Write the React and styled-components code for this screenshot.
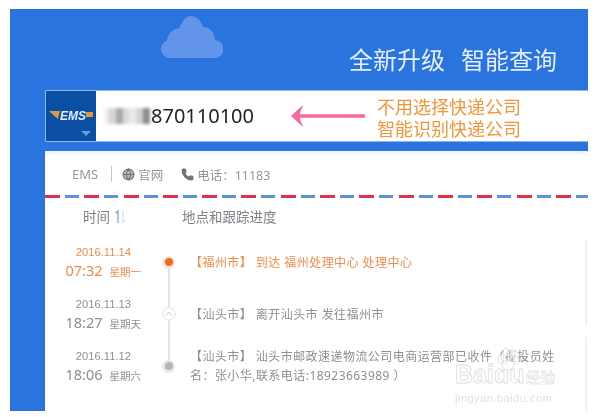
import React from "react";
import styled, { createGlobalStyle } from "styled-components";
import { Globe, Phone } from "lucide-react";

const GlobalStyle = createGlobalStyle`
  html, body {
    margin: 0;
    padding: 0;
    background: #fff;
    overflow: hidden;
  }
  * { box-sizing: border-box; }
`;

const cjk = `"Noto Sans", "Noto Sans CJK SC", sans-serif`;

const Frame = styled.div`
  position: relative;
  width: 578px;
  height: 402px;
  margin: 9px 0 0 10px;
  padding-left: 35px;
  background: #2a74e0;
  font-family: ${cjk};
  filter: blur(0.55px);
  overflow: hidden;
`;

const Banner = styled.header`
  height: 81px;
  display: flex;
  justify-content: space-between;
  padding: 14px 31px 0 115px;
`;

const Cloud = styled.svg`
  width: 63px;
  height: 42px;
  margin-top: -7px;
`;

const Slogan = styled.h1`
  margin: 20px 0 0;
  display: flex;
  gap: 16px;
  height: 34px;
  font-size: 24px;
  line-height: 34px;
  font-weight: 400;
  color: #e6effd;
`;

const SearchBar = styled.div`
  height: 52px;
  display: flex;
  align-items: center;
  background: #fff;
  border-top: 1px solid #8db5ec;
  border-bottom: 1px solid #8db5ec;
  border-left: 1px solid #8db5ec;
`;

const CarrierLogo = styled.div`
  width: 50px;
  height: 50px;
  flex: none;
  display: flex;
  flex-direction: column;
  align-items: center;
  background: #0b4fa4;
  padding-top: 19px;
`;

const LogoMark = styled.div`
  display: flex;
  align-items: center;
  gap: 0;
`;

const LogoWedge = styled.span`
  width: 11px;
  height: 8px;
  margin-top: -2px;
  background: #dc9a45;
  clip-path: polygon(0 0, 100% 0, 80% 100%);
`;

const LogoBar = styled.span`
  width: 7px;
  height: 5px;
  margin-top: -4px;
  background: #dc9a45;
`;

const LogoText = styled.span`
  font-family: "Liberation Sans", sans-serif;
  font-size: 12px;
  line-height: 12px;
  font-weight: 700;
  font-style: italic;
  color: #e4edfa;
`;

const LogoCaret = styled.span`
  margin: 9px 0 0 30px;
  border-left: 5px solid transparent;
  border-right: 5px solid transparent;
  border-top: 5px solid #5fa0e6;
`;

const Mosaic = styled.div`
  display: flex;
  margin-left: 9px;
  height: 16px;
  filter: blur(1.6px);
`;

const MosaicCell = styled.span`
  width: ${(props) => props.$w}px;
  height: 16px;
  background: ${(props) => props.$c};
`;

const Waybill = styled.span`
  margin-left: 1px;
  font-size: 20px;
  line-height: 24px;
  color: #222;
`;

const PointerArrow = styled.svg`
  width: 74px;
  height: 26px;
  flex: none;
  margin-left: 37px;
`;

const Hint = styled.div`
  margin-left: 12px;
  padding-top: 3px;
  font-size: 18px;
  line-height: 22px;
  color: #f5953a;
  white-space: nowrap;
`;

const Card = styled.section`
  height: 260px;
  margin-top: 9px;
  background: #fff;
  box-shadow: inset 0 6px 6px -5px #e4e8ef;
`;

const InfoRow = styled.div`
  height: 44px;
  display: flex;
  align-items: center;
  padding: 2px 0 0 27px;
  font-size: 13px;
  color: #93979c;
`;

const Divider = styled.span`
  width: 1px;
  height: 16px;
  margin: 0 10px 0 13px;
  background: #c4c7cb;
`;

const InfoItem = styled.span`
  display: flex;
  align-items: center;
  gap: 3px;
  margin-right: ${(props) => props.$gap || 0}px;
  font-size: 12.5px;
`;

const AirmailStripe = styled.div`
  height: 3px;
  background: repeating-linear-gradient(
    90deg,
    #e0324b 0 15px,
    transparent 15px 20px,
    #5d93d6 20px 34px,
    transparent 34px 39.3px
  );
`;

const Body = styled.div`
  display: flex;
  height: 213px;
`;

const Main = styled.div`
  flex: 1;
  padding-top: 6px;
`;

const ColumnHeads = styled.div`
  height: 24px;
  display: flex;
  align-items: center;
  font-size: 13.5px;
  color: #7d8186;
`;

const TimeHead = styled.span`
  width: 137px;
  display: flex;
  align-items: center;
  gap: 4px;
  padding-left: 38px;
`;

const SortIcon = styled.svg`
  width: 14px;
  height: 15px;
`;

const Timeline = styled.div`
  margin-top: 8px;
`;

const Row = styled.div`
  height: 52px;
  display: flex;
  color: ${(props) => (props.$active ? "#f7894a" : "#8c9095")};
`;

const When = styled.div`
  width: 96px;
  flex: none;
  display: flex;
  flex-direction: column;
  align-items: flex-end;
  padding-top: 9px;
`;

const DateText = styled.span`
  margin-right: 10px;
  font-family: "Liberation Sans", sans-serif;
  font-size: 11.2px;
  line-height: 15px;
`;

const TimeLine = styled.span`
  display: flex;
  align-items: baseline;
  gap: 7px;
  line-height: 20px;
`;

const Clock = styled.span`
  font-size: 14.5px;
`;

const Weekday = styled.span`
  font-size: 10.5px;
`;

const NodeColumn = styled.div`
  width: 13px;
  flex: none;
  margin-left: 21px;
  display: flex;
  flex-direction: column;
  align-items: center;
`;

const Connector = styled.span`
  width: 2px;
  flex: 1;
  background: ${(props) => (props.$hidden ? "transparent" : "#e3e4e6")};
`;

const Halo = styled.span`
  width: 13px;
  height: 13px;
  flex: none;
  border-radius: 50%;
  display: flex;
  align-items: center;
  justify-content: center;
  background: #e9e9ea;
`;

const Dot = styled.span`
  width: 8px;
  height: 8px;
  border-radius: 50%;
  background: ${(props) => props.$color};
`;

const UpNode = styled.svg`
  width: 14px;
  height: 14px;
  flex: none;
`;

const Detail = styled.div`
  flex: 1;
  margin-left: 15px;
  font-size: 12px;
  line-height: 19px;
  letter-spacing: 0.45px;
  white-space: pre;
  align-self: ${(props) => (props.$wrap ? "flex-start" : "center")};
  padding-top: ${(props) => (props.$wrap ? "7px" : 0)};
`;

const Rail = styled.div`
  width: 2px;
  margin-right: 1px;
  padding-top: 42px;
  display: flex;
  flex-direction: column;
  gap: 12px;
`;

const RailPiece = styled.span`
  display: block;
  height: ${(props) => props.$h}px;
  background: #eeeff0;
`;

const Watermark = styled.div`
  position: absolute;
  left: 445px;
  top: 351px;
  width: 106px;
  color: rgba(255, 255, 255, 0.4);
  pointer-events: none;
`;

const Paw = styled.svg`
  position: absolute;
  left: 41px;
  top: -13px;
  width: 24px;
  height: 24px;
`;

const MarkTop = styled.div`
  display: flex;
  align-items: baseline;
  font-family: "Liberation Sans", sans-serif;
  font-size: 25px;
  line-height: 28px;
  font-weight: 700;
  -webkit-text-stroke: 0.8px rgba(175, 175, 175, 0.45);
`;

const MarkSmall = styled.span`
  margin-left: 1px;
  font-family: ${cjk};
  font-size: 15px;
  font-weight: 400;
  -webkit-text-stroke: 0.4px rgba(175, 175, 175, 0.5);
`;

const MarkUrl = styled.div`
  margin-top: 1px;
  font-family: "Liberation Sans", sans-serif;
  font-size: 11px;
  line-height: 12px;
  letter-spacing: 0.5px;
  color: rgba(185, 185, 185, 0.45);
`;

const mosaic = [
  [4, "#ececec"],
  [7, "#d6d6d6"],
  [7, "#a9a9a9"],
  [6, "#dcdcdc"],
  [8, "#e8e8e8"],
  [6, "#d0d0d0"],
  [7, "#8e8e8e"],
];

const events = [
  {
    date: "2016.11.14",
    time: "07:32",
    day: "星期一",
    active: true,
    node: "current",
    text: "【福州市】 到达 福州处理中心 处理中心",
  },
  {
    date: "2016.11.13",
    time: "18:27",
    day: "星期天",
    node: "up",
    text: "【汕头市】 离开汕头市 发往福州市",
  },
  {
    date: "2016.11.12",
    time: "18:06",
    day: "星期六",
    node: "past",
    text: "【汕头市】 汕头市邮政速递物流公司电商运营部已收件（揽投员姓",
    more: "名：张小华,联系电话:18923663989 ）",
  },
];

const Node = ({ kind }) => {
  if (kind === "up") {
    return (
      <UpNode viewBox="0 0 14 14">
        <circle cx="7" cy="7" r="6.2" fill="#fff" stroke="#dcdddf" />
        <path d="M3.8 8.3 7 5.2l3.2 3.1" fill="none" stroke="#c9cacc" />
      </UpNode>
    );
  }
  return (
    <Halo>
      <Dot $color={kind === "current" ? "#f9680f" : "#b5b6b8"} />
    </Halo>
  );
};

const App = () => {
  return (
    <>
      <GlobalStyle />
      <Frame>
        <Banner>
          <Cloud viewBox="0 0 63 42">
            <path
              d="M10 42a9 9 0 0 1-3-17.5 13 13 0 0 1 12-12C22 5 26 0 31 0c6 0 10 5 12 11 7 0 12 6 12 13a9 9 0 0 1-1 18Z"
              fill="#6295ea"
            />
          </Cloud>
          <Slogan>
            <span>全新升级</span>
            <span>智能查询</span>
          </Slogan>
        </Banner>

        <SearchBar>
          <CarrierLogo>
            <LogoMark>
              <LogoWedge />
              <LogoText>EMS</LogoText>
              <LogoBar />
            </LogoMark>
            <LogoCaret />
          </CarrierLogo>
          <Mosaic>
            {mosaic.map(([w, c], i) => (
              <MosaicCell key={i} $w={w} $c={c} />
            ))}
          </Mosaic>
          <Waybill>870110100</Waybill>
          <PointerArrow viewBox="0 0 74 26">
            <path d="M73 13H8" stroke="#f9689f" strokeWidth="3.5" strokeLinecap="round" />
            <path d="M0 13 12 2 8 13l4 11Z" fill="#f9689f" />
          </PointerArrow>
          <Hint>
            不用选择快递公司
            <br />
            智能识别快递公司
          </Hint>
        </SearchBar>

        <Card>
          <InfoRow>
            EMS
            <Divider />
            <InfoItem $gap={18}>
              <Globe size={13} color="#6f7378" fill="#b6b9bd" strokeWidth={2} />
              官网
            </InfoItem>
            <InfoItem>
              <Phone size={13} color="#6f7378" fill="#6f7378" />
              电话：11183
            </InfoItem>
          </InfoRow>
          <AirmailStripe />
          <Body>
            <Main>
              <ColumnHeads>
                <TimeHead>
                  时间
                  <SortIcon viewBox="0 0 14 15">
                    <path d="M4 14V2L1.5 4.5" fill="none" stroke="#7db0ee" strokeWidth="1.4" />
                    <path d="M9 1v12l2.5-2.5" fill="none" stroke="#dbe6f5" strokeWidth="1.4" />
                  </SortIcon>
                </TimeHead>
                <span>地点和跟踪进度</span>
              </ColumnHeads>
              <Timeline>
                {events.map((e, i) => (
                  <Row key={e.date} $active={e.active}>
                    <When>
                      <DateText>{e.date}</DateText>
                      <TimeLine>
                        <Clock>{e.time}</Clock>
                        <Weekday>{e.day}</Weekday>
                      </TimeLine>
                    </When>
                    <NodeColumn>
                      <Connector $hidden={i === 0} />
                      <Node kind={e.node} />
                      <Connector $hidden={i === events.length - 1} />
                    </NodeColumn>
                    <Detail $wrap={!!e.more}>
                      {e.text}
                      {e.more && (
                        <>
                          <br />
                          {e.more}
                        </>
                      )}
                    </Detail>
                  </Row>
                ))}
              </Timeline>
            </Main>
            <Rail>
              <RailPiece $h={85} />
              <RailPiece $h={74} />
            </Rail>
          </Body>
        </Card>

        <Watermark>
          <Paw viewBox="0 0 24 24">
            <g fill="#fff" fillOpacity="0.65" stroke="#c9c9c9" strokeOpacity="0.5">
              <ellipse cx="5" cy="12" rx="3" ry="4" />
              <ellipse cx="10" cy="5" rx="3" ry="4" />
              <ellipse cx="17" cy="6" rx="3" ry="4" />
              <ellipse cx="20" cy="13" rx="3" ry="4" />
              <ellipse cx="12" cy="18" rx="6" ry="5" />
            </g>
          </Paw>
          <MarkTop>
            Baidu
            <MarkSmall>经验</MarkSmall>
          </MarkTop>
          <MarkUrl>jingyan.baidu.com</MarkUrl>
        </Watermark>
      </Frame>
    </>
  );
};

export default App;
